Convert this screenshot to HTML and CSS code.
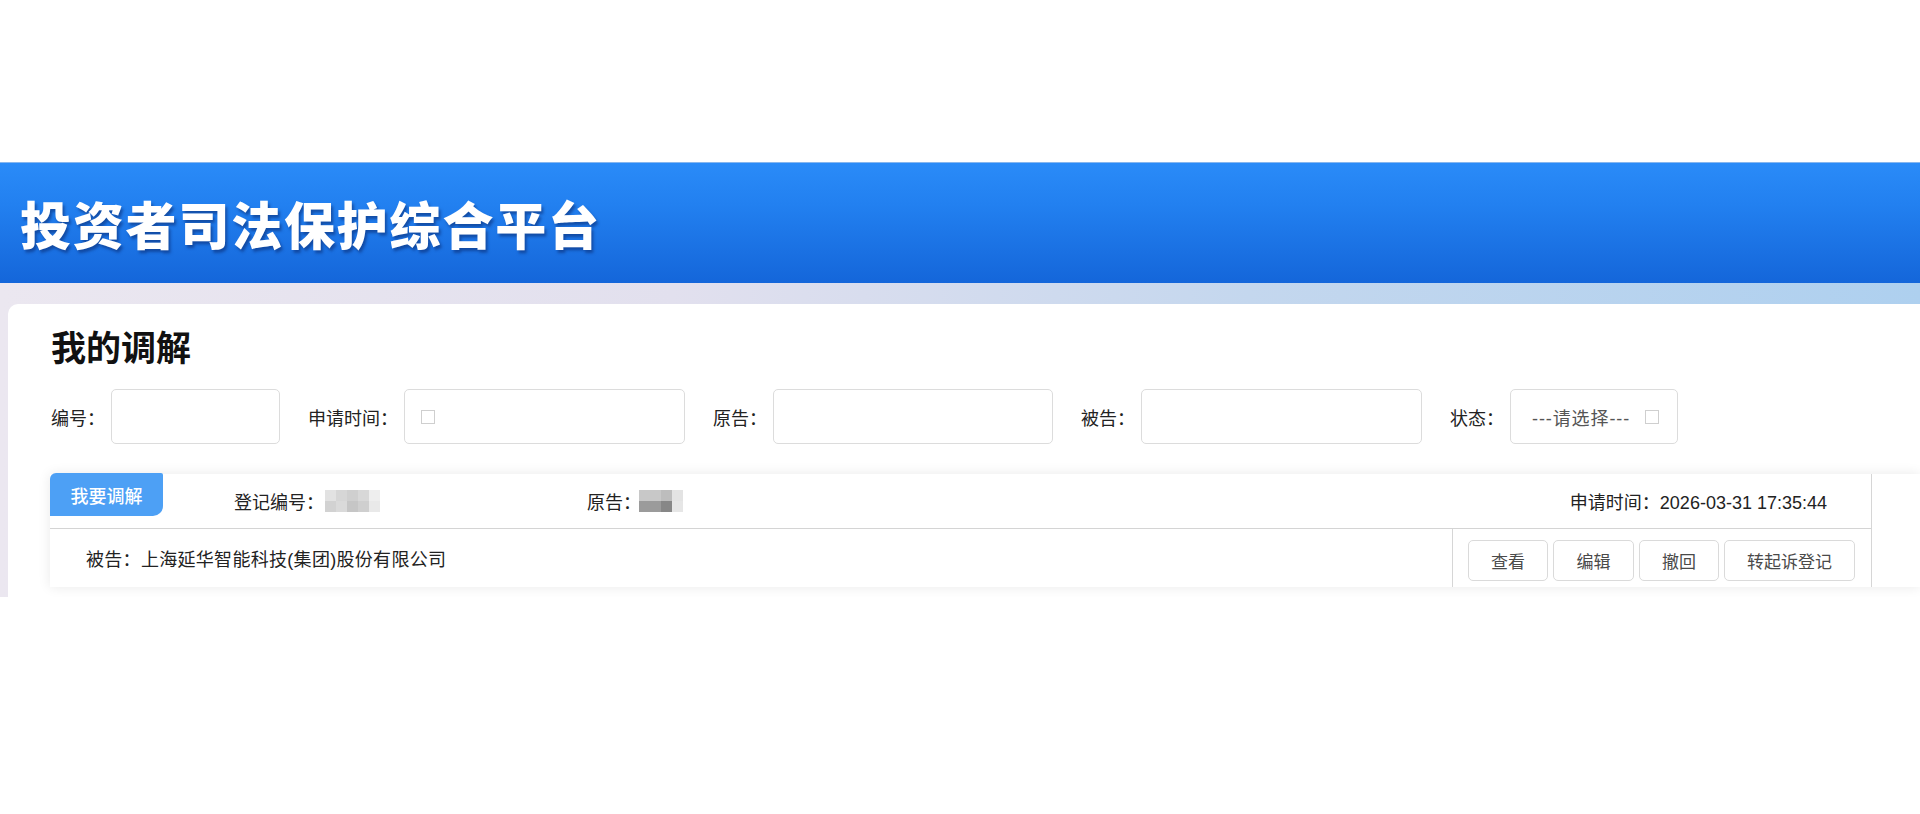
FILE: index.html
```html
<!DOCTYPE html>
<html lang="zh-CN">
<head>
<meta charset="utf-8">
<title>投资者司法保护综合平台 - 我的调解</title>
<link rel="stylesheet" href="styles.css">
</head>
<body>
<div class="app">
  <header class="topbar">
    <h1 class="brand">投资者司法保护综合平台</h1>
  </header>
  <div class="main">
    <section class="card">
      <h2 class="page-title">我的调解</h2>
      <div class="filters">
        <div class="field">
          <span class="field-label">编号：</span>
          <span class="input w-169"></span>
        </div>
        <div class="field">
          <span class="field-label">申请时间：</span>
          <span class="input w-281"><span class="tofu"></span></span>
        </div>
        <div class="field">
          <span class="field-label">原告：</span>
          <span class="input w-280"></span>
        </div>
        <div class="field">
          <span class="field-label">被告：</span>
          <span class="input w-281"></span>
        </div>
        <div class="field">
          <span class="field-label">状态：</span>
          <span class="input select w-168"><span class="placeholder">---请选择---</span><span class="tofu"></span></span>
        </div>
      </div>

      <div class="record-wrap">
        <div class="record">
          <div class="record-top">
            <span class="tag">我要调解</span>
            <span class="rec-item rec-no">登记编号：<span class="mosaic m5"><i class="c1"></i><i class="c2"></i><i class="c3"></i><i class="c4"></i><i class="c5"></i><i class="c6"></i><i class="c7"></i><i class="c8"></i><i class="c9"></i><i class="c10"></i></span></span>
            <span class="rec-item rec-plaintiff">原告：<span class="mosaic m4"><i class="d1"></i><i class="d2"></i><i class="d3"></i><i class="d4"></i><i class="d5"></i><i class="d6"></i></span></span>
            <span class="rec-time">申请时间：2026-03-31 17:35:44</span>
          </div>
          <div class="record-bottom">
            <div class="defendant">被告：上海延华智能科技(集团)股份有限公司</div>
            <div class="actions">
              <button class="btn w-80">查看</button>
              <button class="btn w-81">编辑</button>
              <button class="btn w-80">撤回</button>
              <button class="btn w-131">转起诉登记</button>
            </div>
          </div>
        </div>
      </div>
    </section>
  </div>
</div>
</body>
</html>
```

FILE: styles.css
```css
* { box-sizing: border-box; }

html, body {
  margin: 0;
  padding: 0;
  background: #ffffff;
}

body {
  font-family: "Liberation Sans", "Noto Sans CJK SC", sans-serif;
  color: #222;
}

.app {
  margin-top: 162px;
}

/* ---------- header ---------- */
.topbar {
  height: 121px;
  background: linear-gradient(to bottom, #2a8bf8 0%, #2280f0 35%, #1a70e2 75%, #1466da 100%);
  border-top: 1px solid #86b6ef;
  display: flex;
  align-items: center;
  padding-left: 20px;
}

.brand {
  margin: 0;
  font-family: "Noto Sans CJK SC", sans-serif;
  font-size: 51px;
  font-weight: 900;
  letter-spacing: 1.8px;
  color: #ffffff;
  line-height: 1;
  text-shadow: 2px 3px 3px rgba(10, 40, 110, 0.55);
}

/* ---------- main ---------- */
.main {
  height: 314px;
  overflow: hidden;
  padding: 21px 0 0 8px;
  background: linear-gradient(to right, #ebe7f0 0%, #e2e0ee 35%, #c4d7ee 65%, #aed0ef 100%);
}

.card {
  height: 100%;
  background: #ffffff;
  border-top-left-radius: 10px;
  padding: 22px 0 0 42px;
}

.page-title {
  margin: 0 0 0 1px;
  font-family: "Noto Sans CJK SC", sans-serif;
  font-size: 35px;
  line-height: 40px;
  font-weight: 700;
  color: #111;
}

/* ---------- filters ---------- */
.filters {
  margin: 23px 0 0 1px;
  display: flex;
  align-items: center;
  gap: 28px;
  height: 55px;
}

.field {
  display: flex;
  align-items: center;
  gap: 6px;
}

.field-label {
  font-size: 18px;
  color: #222;
  white-space: nowrap;
}

.input {
  display: flex;
  align-items: center;
  height: 55px;
  border: 1px solid #dcdcdc;
  border-radius: 5px;
  background: #fff;
  padding-left: 16px;
}

.w-168 { width: 168px; }
.w-169 { width: 169px; }
.w-280 { width: 280px; }
.w-281 { width: 281px; }

.tofu {
  display: inline-block;
  width: 14px;
  height: 14px;
  border: 1px solid #cfcfcf;
  background: #fff;
}

.select {
  padding-left: 21px;
  gap: 15px;
}

.placeholder {
  font-size: 18px;
  letter-spacing: 0.9px;
  color: #555;
  white-space: nowrap;
}

/* ---------- record ---------- */
.record-wrap {
  margin-top: 30px;
  background: #fff;
  box-shadow: 0 0 12px rgba(0, 0, 0, 0.09);
}

.record {
  width: 1822px;
  border-right: 1px solid #d6d6d6;
}

.record-top {
  display: flex;
  align-items: center;
  height: 55px;
  border-bottom: 1px solid #d4d4d4;
  font-size: 18px;
  color: #222;
}

.tag {
  align-self: flex-start;
  width: 113px;
  height: 43px;
  margin-top: -1px;
  display: flex;
  align-items: center;
  justify-content: center;
  background: #4da0f5;
  color: #fff;
  font-family: "Noto Sans CJK SC", sans-serif;
  font-size: 18px;
  font-weight: 500;
  border-radius: 6px 2px 10px 0;
}

.rec-item {
  display: flex;
  align-items: center;
  white-space: nowrap;
}

.rec-no {
  margin-left: 71px;
  width: 353px;
}

.mosaic {
  display: grid;
  grid-auto-rows: 11px;
}

.m5 { grid-template-columns: repeat(5, 11px); margin-left: 1px; }
.m4 { grid-template-columns: 22px 11px 11px; margin-left: -2px; }

.mosaic i { display: block; }
.c1 { background: #e2e2e2; }
.c2 { background: #d6d6d6; }
.c3 { background: #cfcfcf; }
.c4 { background: #d8d8d8; }
.c5 { background: #eeeeee; }
.c6 { background: #d2d2d2; }
.c7 { background: #dadada; }
.c8 { background: #c6c6c6; }
.c9 { background: #cfcfcf; }
.c10 { background: #e9e9e9; }

.d1 { background: #c8c8c8; }
.d2 { background: #bdbdbd; }
.d3 { background: #e3e3e3; }
.d4 { background: #9b9b9b; }
.d5 { background: #878787; }
.d6 { background: #e6e6e6; }

.rec-time {
  margin-left: auto;
  padding-right: 44px;
  white-space: nowrap;
}

.record-bottom {
  display: flex;
  height: 58px;
}

.defendant {
  flex: 1;
  display: flex;
  align-items: center;
  padding-left: 36px;
  font-size: 18px;
  letter-spacing: 0.3px;
  color: #222;
}

.actions {
  width: 419px;
  border-left: 1px solid #d6d6d6;
  display: flex;
  gap: 5px;
  padding: 11px 0 0 15px;
}

.btn {
  height: 41px;
  border: 1px solid #dadada;
  border-radius: 5px;
  background: #fff;
  font-family: "Liberation Sans", "Noto Sans CJK SC", sans-serif;
  font-size: 17px;
  color: #4a4a4a;
  padding: 0;
}

.w-80 { width: 80px; }
.w-81 { width: 81px; }
.w-131 { width: 131px; }
```
